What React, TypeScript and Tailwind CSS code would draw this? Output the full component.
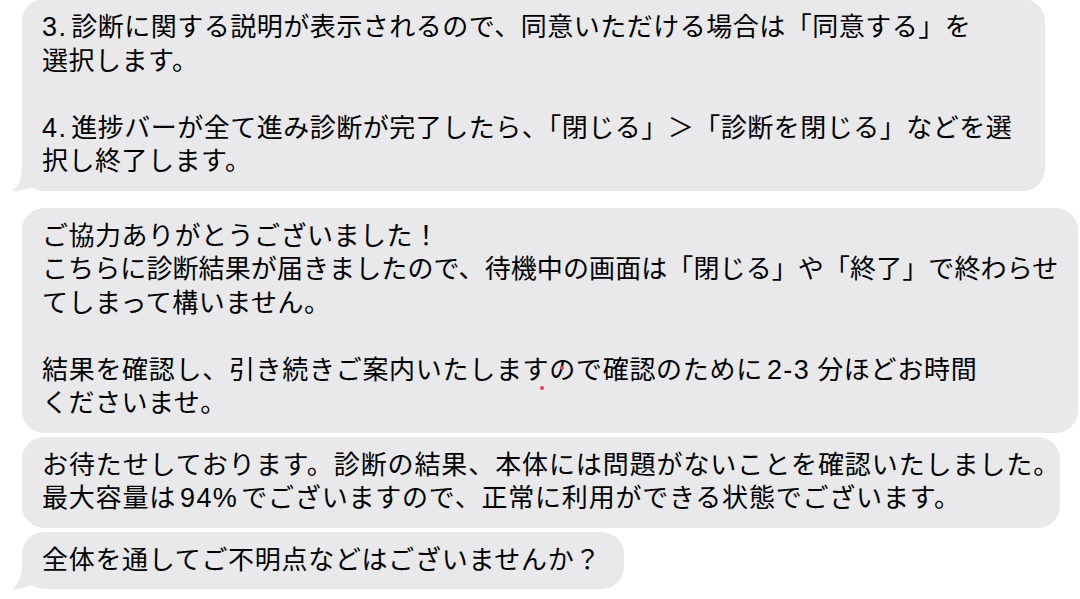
import type { ReactNode } from 'react';

interface BubbleProps {
  lines: ReactNode[];
  width: string;
  tail?: boolean;
  className?: string;
  children?: ReactNode;
}

// latin runs are set a bit larger, like the iOS font mix
function L({ children, right = 'mr-[7px]' }: { children: ReactNode; right?: string }) {
  return <span className={`ml-[4px] ${right} text-[27px] tracking-[1.4px]`}>{children}</span>;
}

function Tail() {
  return (
    <svg
      className="absolute -left-[10px] bottom-0"
      width="24"
      height="24"
      viewBox="0 0 24 24"
    >
      <path d="M10 0 C10 12 6 20 0 24 C8 24.5 16 22 22 19 L22 0 Z" fill="#e9e9eb" />
    </svg>
  );
}

function Bubble({ lines, width, tail, className, children }: BubbleProps) {
  return (
    <div className={`relative ml-[22px] ${width} ${className ?? ''}`}>
      {tail && <Tail />}
      <div className="relative rounded-[22px] bg-[#e9e9eb] py-[12px] pl-[20px] text-[26px] leading-[33.5px] tracking-[0.5px] text-black">
        {lines.map((line, i) => (
          <div key={i} className="whitespace-nowrap">
            {line === '' ? '\u00a0' : line}
          </div>
        ))}
        {children}
      </div>
    </div>
  );
}

export default function App() {
  return (
    <div
      className="h-[599px] w-[1080px] overflow-hidden bg-white"
      style={{ fontFamily: '"Liberation Sans", "Noto Sans CJK JP", sans-serif' }}
    >
      <div className="-mt-[1px] flex flex-col">
        <Bubble
          width="w-[1023px]"
          tail
          lines={[
            <>
              <span className="mr-[4px] text-[27px] tracking-[1.4px]">3.</span>
              診断に関する説明が表示されるので、同意いただける場合は「同意する」を
            </>,
            '選択します。',
            '',
            <>
              <span className="mr-[4px] text-[27px] tracking-[1.4px]">4.</span>
              進捗バーが全て進み診断が完了したら、「閉じる」＞「診断を閉じる」などを選
            </>,
            '択し終了します。',
          ]}
        />
        <Bubble
          width="w-[1056px]"
          className="mt-[17px]"
          lines={[
            'ご協力ありがとうございました！',
            <span className="tracking-[0.1px]">
              こちらに診断結果が届きましたので、待機中の画面は「閉じる」や「終了」で終わらせ
            </span>,
            'てしまって構いません。',
            '',
            <span className="tracking-[0.7px]">
              結果を確認し、引き続きご案内いたしますので確認のために<L>2-3</L>分ほどお時間
            </span>,
            'くださいませ。',
          ]}
        >
          <span className="absolute left-[518px] top-[178px] h-[4px] w-[4px] rounded-full bg-[#e0435a]" />
          <span className="absolute left-[538px] top-[158px] h-[4px] w-[4px] rounded-full bg-[#e0435a]" />
        </Bubble>
        <Bubble
          width="w-[1038px]"
          className="mt-[4px]"
          lines={[
            <span className="tracking-[0.9px]">
              お待たせしております。診断の結果、本体には問題がないことを確認いたしました。
            </span>,
            <span className="tracking-[0.8px]">
              最大容量は<L right="mr-[3px]">94%</L>でございますので、正常に利用ができる状態でございます。
            </span>,
          ]}
        />
        <Bubble
          width="w-[602px]"
          className="mt-[4px]"
          tail
          lines={[
            <span className="tracking-[0.7px]">全体を通してご不明点などはございませんか？</span>,
          ]}
        />
      </div>
    </div>
  );
}
